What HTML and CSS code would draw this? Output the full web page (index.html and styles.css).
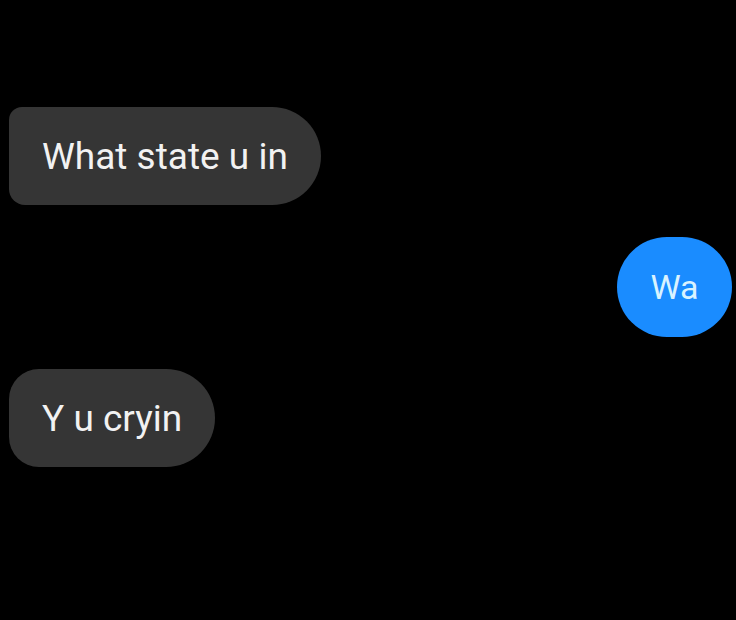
FILE: index.html
```html
<!DOCTYPE html>
<html lang="en">
<head>
    <meta charset="UTF-8">
    <title>Chat</title>
    <link rel="stylesheet" href="styles.css">
</head>
<body>
    <div class="chat">
        <div class="msg msg-in first">What state u in</div>
        <div class="msg msg-out">Wa</div>
        <div class="msg msg-in last">Y u cryin</div>
    </div>
</body>
</html>
```
FILE: styles.css
```css
* {
    margin: 0;
    padding: 0;
    box-sizing: border-box;
}

body {
    background: #000;
    font-family: Roboto, 'Noto Sans', sans-serif;
    height: 620px;
    overflow: hidden;
}

.chat {
    display: flex;
    flex-direction: column;
    padding: 107px 4px 0 9px;
    gap: 32px;
}

.msg {
    height: 98px;
    display: flex;
    align-items: center;
    font-size: 37px;
    color: #f2f2f2;
    padding: 0 33px;
}

.msg-in {
    align-self: flex-start;
    background: #353535;
}

.first {
    border-radius: 13px 49px 49px 16px;
}

.last {
    border-radius: 30px 49px 49px 30px;
}

.msg-out {
    align-self: flex-end;
    background: #1a8cff;
    color: #d9f3ff;
    height: 100px;
    width: 115px;
    justify-content: center;
    padding: 0;
    border-radius: 50px;
    font-size: 34px;
}
```
